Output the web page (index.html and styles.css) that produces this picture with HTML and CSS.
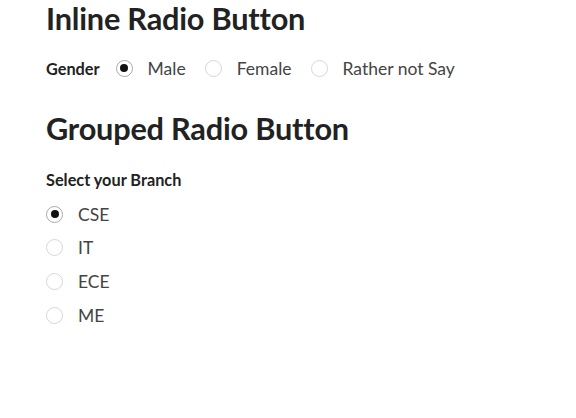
FILE: index.html
```html
<!DOCTYPE html>
<html>
<head>
<meta charset="utf-8">
<link rel="stylesheet" href="styles.css">
</head>
<body>
<div class="page">
  <h2 class="title">Inline Radio Button</h2>
  <div class="inline-row">
    <span class="field-label">Gender</span>
    <label class="opt"><span class="radio checked"></span><span class="txt">Male</span></label>
    <label class="opt"><span class="radio"></span><span class="txt">Female</span></label>
    <label class="opt"><span class="radio"></span><span class="txt">Rather not Say</span></label>
  </div>
  <h2 class="title title2">Grouped Radio Button</h2>
  <div class="group-label">Select your Branch</div>
  <div class="group">
    <label class="opt"><span class="radio checked"></span><span class="txt">CSE</span></label>
    <label class="opt"><span class="radio"></span><span class="txt">IT</span></label>
    <label class="opt"><span class="radio"></span><span class="txt">ECE</span></label>
    <label class="opt"><span class="radio"></span><span class="txt">ME</span></label>
  </div>
</div>
</body>
</html>
```
FILE: styles.css
```css
html, body { margin: 0; padding: 0; background: #fff; }
body { font-family: Lato, "Open Sans", sans-serif; color: #333; }
.page { padding: 0 0 0 46px; }
.title { margin: 0; padding-top: 1px; font-size: 30.7px; font-weight: 700; color: #222; line-height: 36px; letter-spacing: -0.2px; }
.title2 { margin-top: 32px; }
.inline-row { display: flex; align-items: center; margin-top: 21px; height: 20px; }
.field-label { font-size: 16.3px; font-weight: 700; color: #222; margin-right: 16px; }
.opt { display: flex; align-items: center; }
.inline-row .opt { margin-right: 19px; }
.radio { width: 15px; height: 15px; border: 1px solid #d6d6d6; border-radius: 50%; box-sizing: content-box; display: flex; align-items: center; justify-content: center; flex: none; }
.radio.checked { border-color: #a8a8a8; }
.radio.checked::after { content: ""; width: 8px; height: 8px; border-radius: 50%; background: #111; }
.txt { font-size: 17.5px; color: #444; margin-left: 15px; }
.group-label { font-size: 16.3px; font-weight: 700; color: #222; margin-top: 23px; }
.group { display: flex; flex-direction: column; gap: 13.7px; margin-top: 15px; }
.group .opt { height: 20px; }
```
